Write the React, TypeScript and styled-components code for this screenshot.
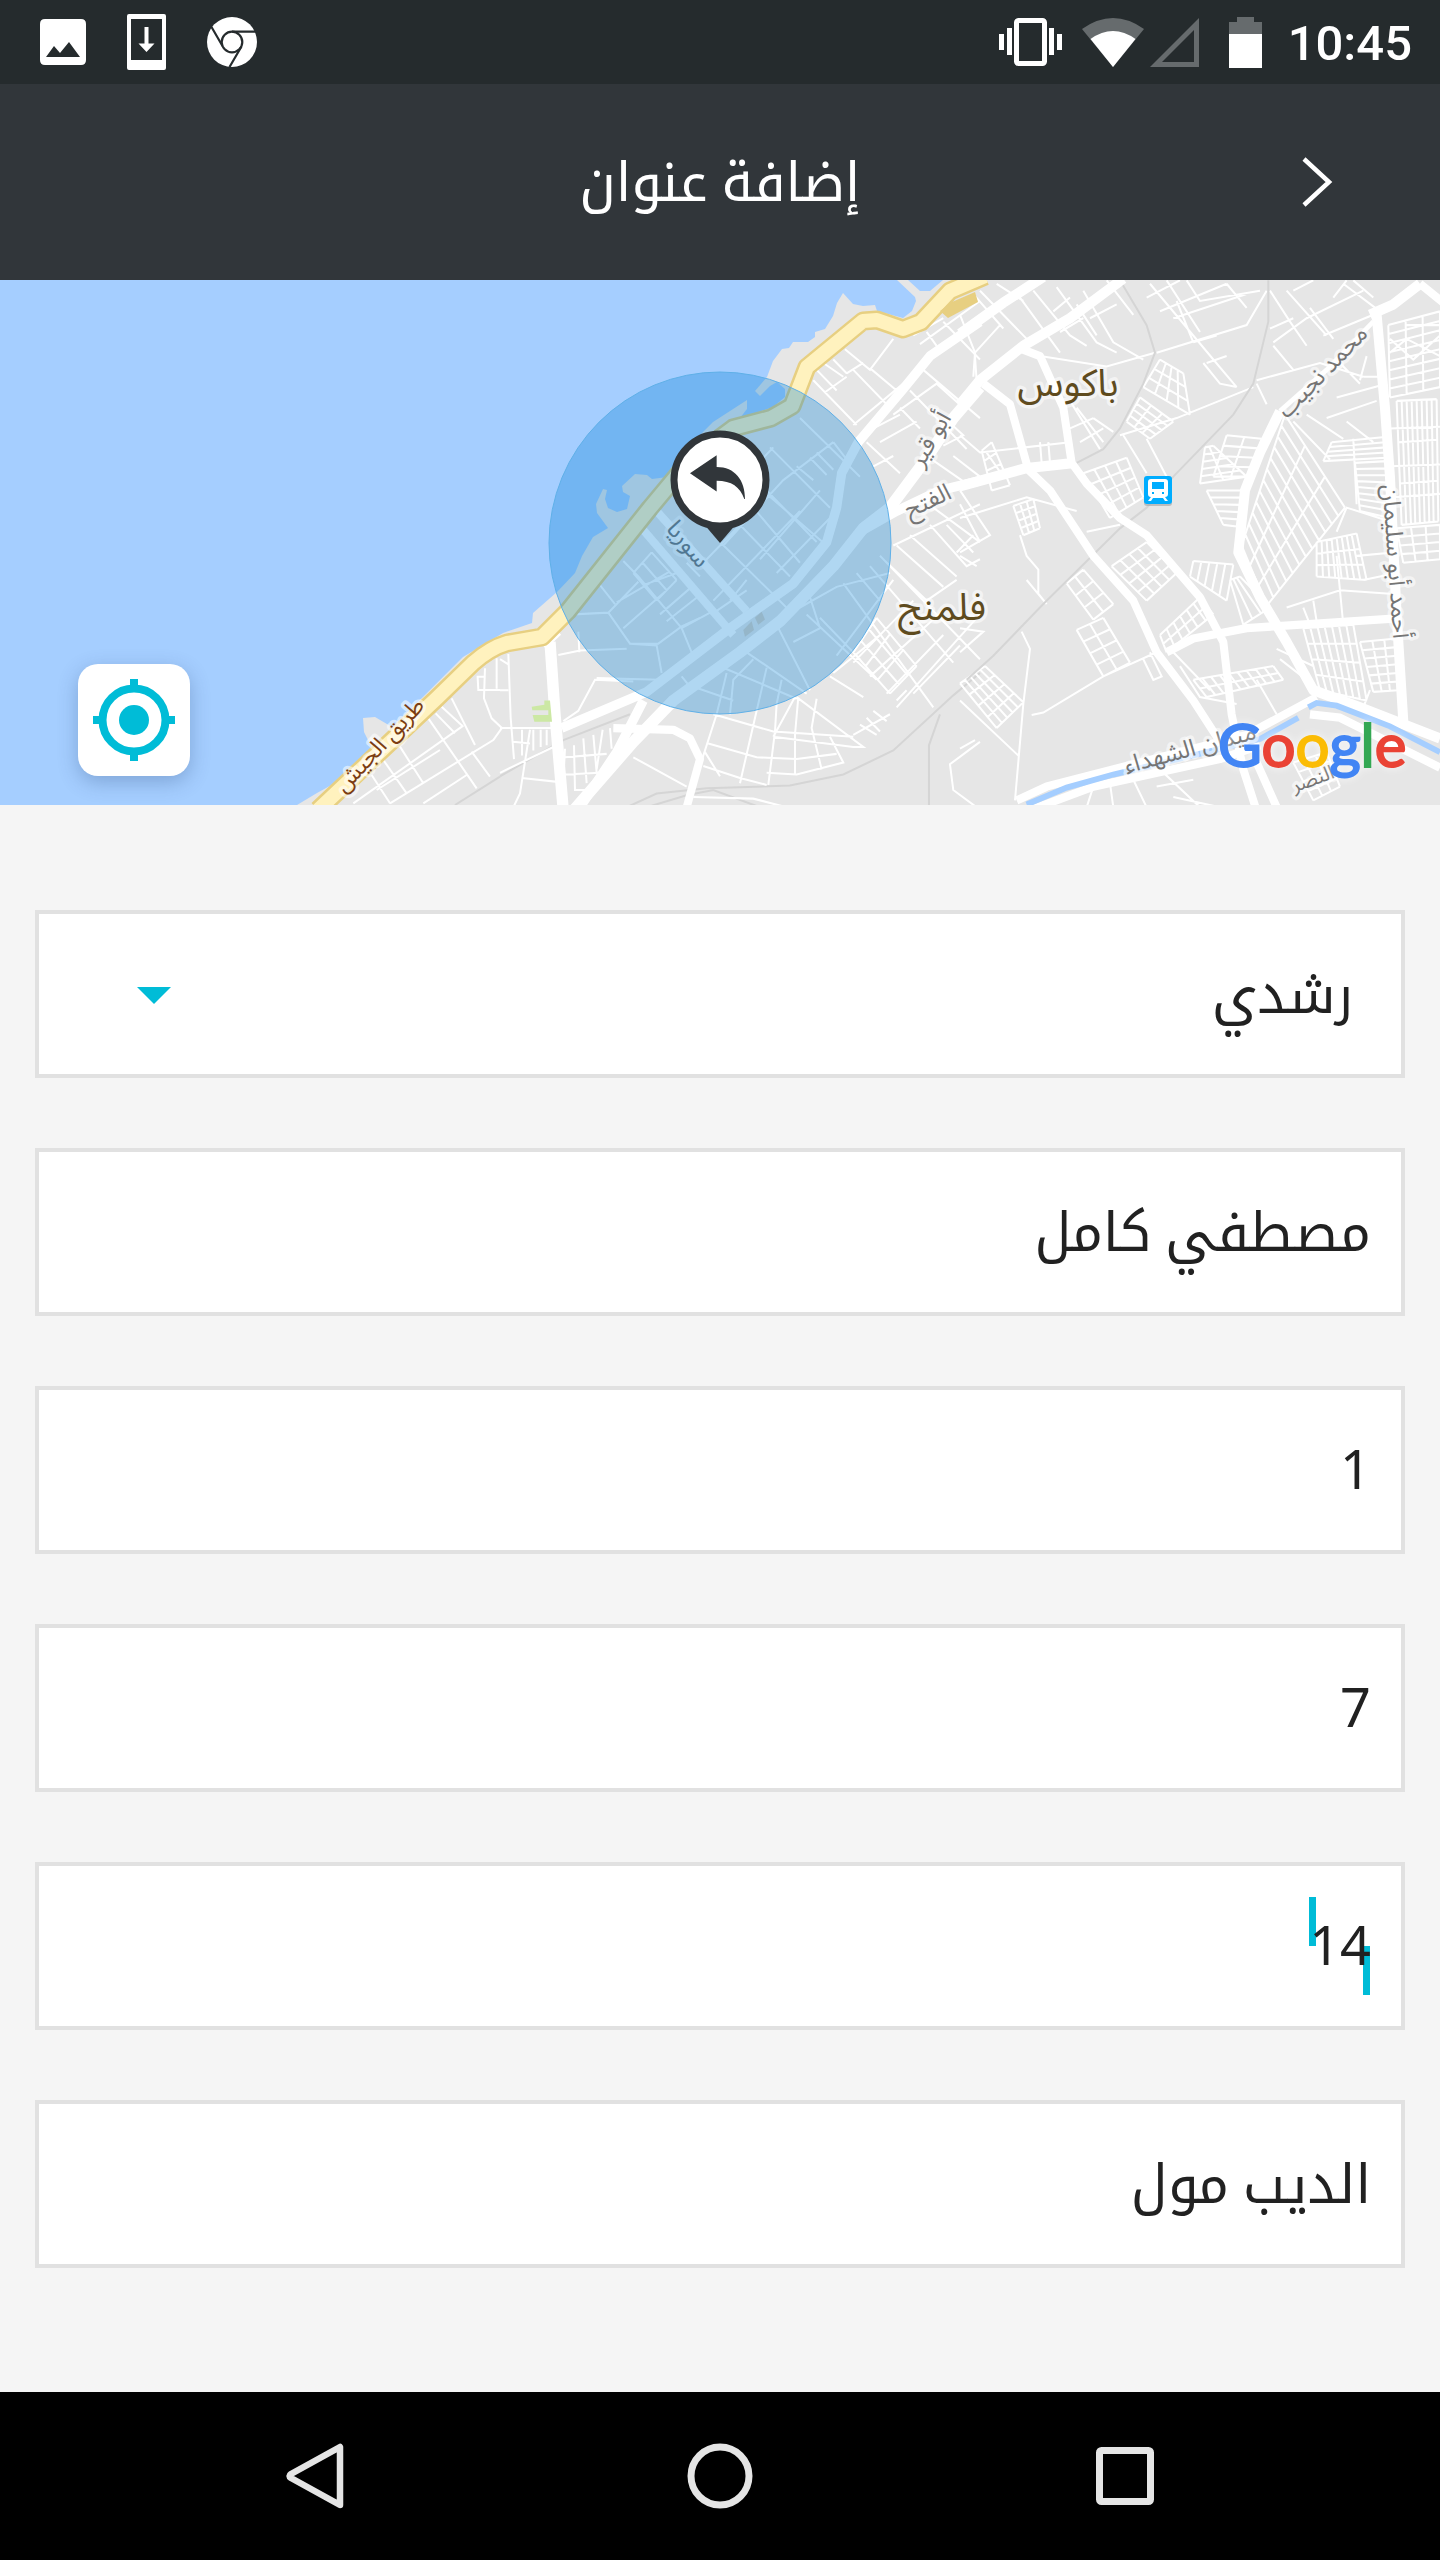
import React, { useState } from 'react';
import styled, { createGlobalStyle } from 'styled-components';

const ui = "'Noto Sans', 'Noto Kufi Arabic', 'Noto Sans Arabic', 'DejaVu Sans', sans-serif";
const cyan = '#00bcd7';
const ink = '#31363a';

const GlobalStyle = createGlobalStyle`
  *, *::before, *::after { box-sizing: border-box; }
  body { margin: 0; background: #f5f5f5; font-family: ${ui}; }
  button { border: 0; padding: 0; background: none; font: inherit; color: inherit; cursor: pointer; }
  svg { display: block; flex: none; }
`;

const Screen = styled.div`
  display: flex;
  flex-direction: column;
  min-height: 100vh;
`;

const StatusBar = styled.div`
  display: flex;
  direction: ltr;
  align-items: center;
  justify-content: space-between;
  height: 84px;
  padding: 0 28px 0 40px;
  background: #252b2d;
`;

const StatusGroup = styled.div<{ $gap: number }>`
  display: flex;
  align-items: center;
  gap: ${(p) => p.$gap}px;
`;

const Clock = styled.span`
  padding-top: 4px;
  font: 500 49px/80px Roboto, sans-serif;
  color: #fff;
`;

const Header = styled.header`
  display: grid;
  grid-template-columns: 1fr auto 1fr;
  align-items: center;
  height: 196px;
  padding: 0 82px;
  background: ${ink};
  color: #fff;
`;

const BackButton = styled.button`
  display: grid;
  place-items: center;
  width: 80px;
  height: 80px;
`;

const Title = styled.h1`
  margin: 0;
  padding-bottom: 4px;
  font-size: 54px;
  font-weight: 400;
  line-height: 80px;
`;

const MapPanel = styled.section`
  position: relative;
  height: 525px;
  overflow: hidden;
  background: #a5ceff;
`;

const MapDrawing = styled.svg`
  width: 100%;
  height: 100%;
`;

const LocateButton = styled.button`
  position: absolute;
  left: 78px;
  bottom: 29px;
  display: grid;
  place-items: center;
  width: 112px;
  height: 112px;
  border-radius: 20px;
  background: #fff;
  box-shadow: 0 6px 20px rgba(40, 70, 120, 0.3);
`;

const Form = styled.form`
  display: flex;
  flex: 1;
  flex-direction: column;
  gap: 70px;
  padding: 105px 35px 124px;
`;

const Field = styled.div`
  position: relative;
  display: flex;
  height: 168px;
  border: 4px solid #e1e1e1;
  background: #fff;
`;

const TextInput = styled.input`
  width: 100%;
  padding: 0 30px 4px;
  border: 0;
  outline: 0;
  background: none;
  color: #212121;
  font: 400 54px/120px ${ui};
`;

const AreaSelect = styled.select`
  width: 100%;
  padding: 0 48px 4px;
  border: 0;
  outline: 0;
  appearance: none;
  background: none;
  color: #212121;
  font: 400 54px/120px ${ui};
`;

const SelectArrow = styled.svg`
  position: absolute;
  left: 98px;
  top: 73px;
  pointer-events: none;
`;

const Caret = styled.span<{ $low?: boolean }>`
  position: absolute;
  top: ${(p) => (p.$low ? 80 : 31)}px;
  right: ${(p) => (p.$low ? 31 : 85)}px;
  width: 7px;
  height: 49px;
  background: ${cyan};
`;

const AboveCarets = styled(TextInput)`
  position: relative;
  z-index: 1;
`;

const NavBar = styled.nav`
  display: flex;
  direction: ltr;
  height: 168px;
  padding: 0 112px;
  background: #000;
`;

const NavButton = styled.button`
  display: grid;
  flex: 1;
  place-items: center;
`;

type Pt = [number, number];

/* Street block: a quad cut into cols x rows by straight lines. */
function block([a, b, c, d]: Pt[], cols: number, rows: number) {
  const mix = (p: Pt, q: Pt, t: number) =>
    `${Math.round(p[0] + (q[0] - p[0]) * t)} ${Math.round(p[1] + (q[1] - p[1]) * t)}`;
  let path = '';
  for (let i = 0; i <= cols; i++) path += `M${mix(a, b, i / cols)}L${mix(d, c, i / cols)}`;
  for (let i = 0; i <= rows; i++) path += `M${mix(a, d, i / rows)}L${mix(b, c, i / rows)}`;
  return path;
}

const LAND =
  'M297 525L317 513L337 502L372 468L364 452L363 438L375 437L392 447L423 417L463 377L503 353L532 343L533 333L557 312L575 293L582 276L593 257L608 248L597 233L596 224L603 209L607 210L605 219L608 228L617 232L627 229L630 216L623 212L622 206L635 194L647 195L652 199L667 197L700 155L713 142L747 120L747 129L740 138L773 127L785 117L785 109L777 102L770 106L760 116L755 111L767 97L773 81L782 69L789 68L793 62L808 62L815 57L815 52L825 49L833 36L837 23L843 13L853 24L863 26L875 25L877 31L903 38L912 31L916 21L915 17L897 0H908L920 11H930L943 0H1440V525Z';

const COAST =
  'M318 530L437 418L473 383Q490 368 507 363L542 357L568 331L650 228L690 180L733 148L771 138L792 126L807 87L863 41L877 40L903 49L921 42L950 11L985 -4';

const west = {
  minor:
    'M220 640L550 407M430 640L560 555M330 640L640 450L665 415M360 470L430 580M275 555L330 640M310 510L380 610M445 385L590 595M485 350L550 410M467 370L525 430M515 325L585 465M575 485L630 560M390 520L550 407M290 600L480 480M615 235L612 325L635 385L665 413M590 260H612M593 262L595 300H660M650 205V296',
  rail: 'M525 645L660 560',
};

const central = {
  minor: [
    'M25 1115L32 1300L42 1420M0 1220H25M0 1130L25 1145M0 1330H170M0 1460L160 1385M65 1475L180 1487M90 1335L60 1520L40 1560M40 1370L90 1375M66 1335V1410M100 1335V1395M122 1335V1385M140 1335V1380',
    'M195 1390L190 1480M195 1415L320 1405M195 1465L300 1460M222 1380L225 1510H260M250 1360L260 1490M280 1350L290 1460M308 1335L290 1450M330 1330L335 1390M175 1118L240 1105L380 1100M235 1050L238 1110M190 1310L235 1280L285 1190L400 1195M290 1185L480 1190M400 1415L560 1500M580 1530L760 1535L860 1560',
    'M370 845L415 890L545 1040L575 1110M300 915L345 970M325 995L415 905M220 1000L325 995L390 1085L470 1090L485 1170M390 1085H475L545 1035L600 1010M350 965L510 875M370 1040L500 930M430 915L530 880M480 1000L575 920M500 1020L605 940M545 1040L640 990',
    'M545 1180L570 1210M580 1210L700 1250M670 1155L890 1245M680 1170L650 1290L600 1440M760 1130L700 1190L690 1290M740 1110L920 1230M800 1155L770 1280L720 1490M845 1190L830 1260L825 1340L805 1495M895 1240L885 1350V1465M950 1245L935 1330L965 1450M640 1290L820 1340L1060 1355M625 1375L770 1415L890 1420L1010 1405M610 1440L720 1475L800 1495M615 1400L660 1470M800 1460L890 1465L1030 1430L990 1355M820 1355L885 1240M890 1240L1090 1385L1060 1385L820 1355',
    'M660 790L870 990M560 850L600 890M600 860L760 700M640 960L900 700M700 720L870 890M760 690L900 850M800 640L950 790M740 600L980 800M810 515L990 690M620 720L820 515M670 800L850 610L1000 500M780 840L960 640M830 880L990 720M690 960L740 900M650 990L740 930M900 430L1080 600M930 545L980 595M950 530L1000 580M890 570L940 610M1000 500L1040 550',
    'M830 1030L930 1220M880 1080L960 1040L930 950M920 1000L1130 1190M960 1010L1080 1130M900 980L1010 920L1170 880M1030 910L1300 1270M1070 880L1140 960M1110 860L1360 1140M1140 830L1440 1130M1010 1120L1180 900M1060 1140L1240 960M1110 1180L1340 980M1160 1230L1330 1060M1190 1270L1440 1000M1240 1230L1380 1090M1000 1170L1140 1060M990 1180L1090 1240',
    'M950 290L1010 350M970 270L1030 310M1000 260L1040 300M975 355L1040 310M940 320L1070 450M1035 230L1110 290L1180 200M1110 285L1190 350M1040 300L1090 270M1060 290L1170 400M1060 450L1210 330M1080 480L1200 420M1200 400L1260 460M1180 420L1310 330L1390 400M1230 350L1400 520M1270 290L1440 430M1100 500L1200 590M1140 500L1250 440M1120 570L1180 540M1280 540L1400 620M1330 510L1390 480L1300 400M1360 540L1440 600',
    'M1240 190L1330 140M1260 215L1440 90M1280 180L1310 220M1330 150L1440 260M1425 250L1430 320M1180 800L1440 680M1150 840L1280 960L1370 900M1190 800L1330 920M1230 770L1370 890M1290 740L1400 860L1440 840M1340 740L1420 820M1370 820L1420 770M1300 690L1440 790M1440 1370L1350 1435L1360 1510L1430 1560M1100 1300L1140 1340M1120 1280L1160 1310M1080 1320L1130 1350M1060 1350L1170 1290M1190 1250L1220 1220',
    block([[455, 820], [530, 900], [470, 960], [400, 880]], 1, 2),
    block([[1130, 1010], [1250, 1150], [1170, 1230], [1060, 1110]], 3, 3),
  ].join(''),
  rail: 'M0 1470L190 1365L390 1290M380 1560L470 1520L620 1505L870 1497L1030 1465L1180 1395L1360 1235L1440 1170M1320 1290L1287 1380V1560M440 1560L560 1525L640 1510L780 1560',
};

const eastern = {
  minor: [
    block([[1285, 160], [1440, 120], [1440, 340], [1290, 370]], 3, 8),
    block([[1310, 380], [1430, 375], [1435, 730], [1325, 740]], 8, 3),
    block([[1115, 500], [1275, 485], [1280, 545], [1090, 555]], 1, 4),
    block([[1185, 560], [1280, 555], [1290, 720], [1200, 700]], 1, 8),
    block([[975, 420], [1155, 690], [920, 975], [845, 800]], 3, 12),
    block([[1070, 790], [1190, 765], [1220, 900], [1070, 890]], 8, 3),
    block([[1310, 750], [1440, 740], [1440, 840], [1330, 850]], 3, 4),
    block([[1030, 1040], [1180, 1030], [1220, 1250], [1080, 1220]], 7, 4),
    block([[1200, 1080], [1310, 1070], [1315, 1220], [1240, 1225]], 3, 6),
    block([[800, 480], [905, 490], [865, 600], [760, 600]], 2, 4),
    block([[735, 515], [760, 510], [860, 600], [720, 620]], 2, 5),
    block([[740, 640], [850, 640], [830, 745], [790, 740]], 1, 5),
    block([[370, 590], [500, 545], [550, 660], [450, 720]], 4, 4),
    block([[455, 860], [560, 790], [650, 880], [560, 960]], 4, 4),
    block([[600, 1060], [720, 950], [760, 1000], [620, 1110]], 6, 2),
    block([[700, 845], [820, 855], [800, 960], [690, 890]], 5, 1),
    block([[700, 1190], [940, 1150], [970, 1190], [740, 1240]], 9, 2),
    block([[160, 685], [220, 665], [240, 750], [190, 770]], 3, 4),
    block([[320, 910], [370, 870], [460, 970], [400, 1015]], 2, 3),
    block([[350, 1045], [430, 1010], [510, 1140], [430, 1180]], 2, 4),
    block([[0, 1200], [75, 1150], [190, 1255], [110, 1330]], 5, 4),
    block([[600, 260], [670, 300], [690, 420], [550, 340]], 4, 3),
    block([[500, 440], [540, 370], [640, 440], [570, 490]], 4, 3),
    block([[65, 525], [95, 500], [150, 625], [95, 640]], 1, 4),
    block([[810, 900], [840, 890], [930, 980], [850, 1030]], 3, 1),
    block([[1000, 1430], [1100, 1400], [1140, 1500], [1060, 1540]], 3, 4),
    'M40 70L130 170M60 60L200 200M110 40L190 90M0 130L45 240L40 310M45 240L120 160M180 80L300 240M220 60L330 190L380 220M290 50L410 210L470 240M350 100L410 190M370 60L460 210L550 260M440 30L520 130M390 140L470 100M240 250L440 280L585 240M300 180L370 140M280 120L330 80',
    'M570 40L760 260L830 340M560 80L660 30M620 30L720 180M600 120L800 40M640 140L860 70M680 30L720 90L900 60M590 240L860 160L920 60M800 40L860 110M650 90L700 210M700 210L770 190M740 270L800 250M730 270L780 330L830 340M480 480L650 430L880 340M490 480L560 590M560 490L620 600M420 520L330 380M330 460L400 430M360 500L430 460M400 430L460 470M350 400L430 500',
    'M930 60L990 150L1040 220M980 60L1100 190M940 210L1040 140L1210 60M1050 110L1120 200M930 170L1000 140M890 320L1080 270L1210 310M890 330L920 390M940 220L1000 290M1150 40L1260 120M1180 30L1240 80M1000 60L1060 30M1120 80L1160 30M1090 190L1240 130M1100 430L1250 380M1160 440L1240 500M1000 440L1110 550M1040 420L1150 490M1130 370L1280 330M1200 320L1220 250M1130 260L1200 330M1210 310H1280',
    'M0 720L200 660L350 700M0 640L90 770L0 820M0 830L50 860M0 680L60 790M180 770L200 830L235 870V940L260 970M185 1050L210 1100L190 1260L165 1540M0 1040L70 1050L0 1110M430 1180L250 1285L215 1292M0 1250L175 1410M430 1180L590 1110M550 1130L580 1190L605 1180L570 1110M0 480L60 530L330 500M80 530L130 600M240 500L245 560M265 500L270 560M380 760L480 740M200 900L260 970M0 1390L45 1365',
    'M640 1110L750 1220M660 1150L720 1240L830 1260M890 1190L950 1290M950 1100L1060 1150M960 1130L1040 1190M980 980L1140 930L1290 940M1130 760L1160 690L1290 730M1180 490L1190 680M1290 460L1440 455M1290 570L1440 565M1300 660L1440 650M1060 960L1070 1020M1030 980L1050 1030M1130 830L1150 1030M1190 830L1300 820M1210 900L1310 880M450 1490L460 1560M520 1480L560 1560M600 1450L720 1560M590 1500L700 1480M400 1500L380 1560M640 1530L780 1560M1230 1220L1210 1270M1340 160H1440M1290 240L1340 200L1440 250M1290 200L1360 260L1440 190',
  ].join(''),
  rail: 'M20 1190L100 1120L250 970L480 750L560 690L640 600L820 420L880 330L925 150V30M480 30L560 160L585 240L550 330L480 460L430 520L350 560',
};

const StreetLabel = styled.text<{ $size: number; $tone: string }>`
  font-family: 'Noto Sans Arabic', 'DejaVu Sans', sans-serif;
  font-size: ${(p) => p.$size}px;
  fill: ${(p) => p.$tone};
  stroke: rgba(255, 255, 255, 0.55);
  stroke-width: 7px;
  stroke-linejoin: round;
  paint-order: stroke;
  text-anchor: middle;
  direction: rtl;
`;

const Wordmark = styled.text`
  font-family: Lato, sans-serif;
  font-size: 60px;
  font-weight: 400;
  stroke-width: 2px;
  direction: ltr;
  filter: drop-shadow(0 0 4px rgba(255, 255, 255, 0.8));
`;

const Letter = styled.tspan<{ $tone: string }>`
  fill: ${(p) => p.$tone};
  stroke: ${(p) => p.$tone};
`;

const labels = [
  { text: 'باكوس', x: 1068, y: 116, turn: 0, size: 38, tone: '#5f4b1e' },
  { text: 'فلمنج', x: 942, y: 340, turn: 0, size: 38, tone: '#5f4b1e' },
  { text: 'سوريا', x: 682, y: 269, turn: 50, size: 24, tone: '#757575' },
  { text: 'أبو قير', x: 937, y: 163, turn: -60, size: 24, tone: '#757575' },
  { text: 'الفتح', x: 931, y: 228, turn: -25, size: 24, tone: '#757575' },
  { text: 'محمد نجيب', x: 1328, y: 97, turn: -46, size: 24, tone: '#757575' },
  { text: 'أحمد أبو سليمان', x: 1388, y: 282, turn: 86, size: 24, tone: '#757575' },
  { text: 'ميدان الشهداء', x: 1192, y: 476, turn: -15, size: 24, tone: '#757575' },
  { text: 'النصر', x: 1315, y: 505, turn: -20, size: 20, tone: '#757575' },
  { text: 'طريق الجيش', x: 385, y: 470, turn: -47, size: 23, tone: '#7b3d12' },
];

function CityMap() {
  return (
    <MapDrawing viewBox="0 0 1440 525" preserveAspectRatio="xMidYMid slice" role="img" aria-label="خريطة">
      <path d={LAND} fill="#e6e6e6" />
      <g fill="none" stroke="#fff" strokeWidth="6">
        <g transform="translate(280 310) scale(.3333)">
          <path d={west.minor} />
          <path d={west.rail} stroke="#d5d5d5" />
        </g>
        <g transform="translate(500 -10) scale(.3333 .3444)">
          <path d={central.rail} stroke="#d5d5d5" />
          <path d={central.minor} />
          <g strokeLinejoin="round">
            <path strokeWidth="34" d="M150 1080L165 1290L190 1570M220 1570L400 1370L520 1250L720 1110L840 1020L1000 860L1090 750L1170 690L1270 560L1360 430L1440 340" />
            <path strokeWidth="28" d="M185 1330L440 1225L690 1040L880 910L980 790L1010 690L1025 590L1075 500L1210 345L1290 250L1440 150M430 1250L350 1400L240 1560M1080 760L1190 700L1320 640L1440 612" />
            <path strokeWidth="24" d="M340 1330L520 1335L570 1360L600 1420L560 1560M470 700L740 990M430 755L700 1060M130 1092L175 1050" />
          </g>
          <path d="M95 1268L133 1262V1250H150L156 1312H103L98 1292H145V1278H97Z" fill="#cce8a4" stroke="none" />
          <path d="M730 1045L755 1020L762 1045L735 1065ZM765 1010L785 992L795 1015L775 1030Z" fill="#d8cfc4" stroke="none" />
        </g>
        <g transform="translate(960 -10) scale(.3333 .3444)">
          <path d={eastern.minor} />
          <path d={eastern.rail} stroke="#d5d5d5" />
          <g strokeLinejoin="round">
            <path strokeWidth="30" d="M0 185L130 95L250 20M0 390L60 320L190 220L330 140L490 25M0 628L200 575L345 560M1380 40L1300 100L1230 130M1250 130L1275 400L1290 600L1310 1000L1330 1310M960 410L900 530L855 640L835 820L900 950L980 1080L1060 1220L1200 1270L1440 1360" />
            <path strokeWidth="24" d="M185 230L240 250L310 400L335 560L380 620L480 720L560 770L720 950L790 1080L815 1290L850 1450L890 1570M70 330L150 390L205 580L270 640L400 830L520 960L590 1110L700 1250L780 1370M620 1110L700 1070L860 1040L1300 1012M170 1540L260 1500L860 1350L1070 1240M220 1565L400 1500L780 1420L900 1380M1050 1290L1140 1300L1440 1445M890 1430L955 1570M1380 40L1450 95" />
            <path strokeWidth="14" d="M1240 150L1100 290L960 410" />
          </g>
          <path strokeWidth="17" stroke="#a5ceff" d="M200 1552L320 1503L460 1465L740 1400L900 1362L1015 1300M1045 1270L1070 1257L1130 1265L1290 1325L1440 1400" />
        </g>
      </g>
      <g fill="none" strokeLinejoin="round">
        <path d={COAST} stroke="#e7cf81" strokeWidth="19" />
        <path d={COAST} stroke="#fff2be" strokeWidth="14" />
      </g>
      <path d="M940 31L952 22L975 12L978 22L948 38Z" fill="#e7cf81" />
      {labels.map((l) => (
        <StreetLabel key={l.text} $size={l.size} $tone={l.tone} transform={`translate(${l.x} ${l.y}) rotate(${l.turn})`}>
          {l.text}
        </StreetLabel>
      ))}
      <rect x="1144" y="198" width="28" height="28" rx="3" fill="#aaa" opacity=".7" />
      <rect x="1144" y="196" width="28" height="28" rx="3" fill="#00adff" />
      <path
        d="M1151 199h14q3 0 3 3v12q0 3-3 3l3 4h-3l-2-3h-10l-2 3h-3l3-4q-3 0-3-3v-12q0-3 3-3ZM1152 202v7h12v-7ZM1152 212v2h2v-2ZM1162 212v2h2v-2Z"
        fill="#fff"
        fillRule="evenodd"
      />
      <circle cx="720" cy="263" r="171" fill="rgba(0,125,213,.31)" stroke="#5fb0e8" strokeWidth="1" />
      <path d="M703 243L720 263L737 243Z" fill={ink} />
      <circle cx="720" cy="200" r="46" fill="#fff" stroke={ink} strokeWidth="7" />
      <path
        transform="translate(500 -10) scale(.3333 .3444)"
        d="M570 590L650 538V572C705 572 735 610 735 665H733C720 630 695 612 650 612V643Z"
        fill={ink}
      />
      <Wordmark x="1218" y="487">
        <Letter $tone="#4285f4">G</Letter>
        <Letter $tone="#ea4335">o</Letter>
        <Letter $tone="#fbbc05">o</Letter>
        <Letter $tone="#4285f4">g</Letter>
        <Letter $tone="#34a853">l</Letter>
        <Letter $tone="#ea4335">e</Letter>
      </Wordmark>
    </MapDrawing>
  );
}

function StatusIcons() {
  return (
    <StatusBar>
      <StatusGroup $gap={41}>
        <svg width="46" height="46" viewBox="0 0 46 46">
          <path fill="#fff" fillRule="evenodd" d="M5 0h36q5 0 5 5v36q0 5-5 5H5q-5 0-5-5V5q0-5 5-5ZM6 38h34L29 23 20 34 14 27Z" />
        </svg>
        <svg width="39" height="56" viewBox="0 0 39 56">
          <path fill="#fff" fillRule="evenodd" d="M2 0h35q2 0 2 2v52q0 2-2 2H2q-2 0-2-2V2q0-2 2-2ZM4 5v41h31V5Z" />
          <path fill="#fff" d="M17.500 13h4v16.500h6L19.500 38 11.500 29.500h6Z" />
        </svg>
        <svg width="50" height="50" viewBox="0 0 50 50">
          <circle cx="25" cy="25" r="25" fill="#fff" />
          <g fill="none" stroke="#252b2d" strokeWidth="2.200">
            <circle cx="25" cy="25" r="10.300" />
            <path d="M25 14.700H49M15.500 29L4.500 10M34.500 29.500L22.500 50" />
          </g>
        </svg>
      </StatusGroup>
      <StatusGroup $gap={26}>
        <StatusGroup $gap={30}>
          <StatusGroup $gap={20}>
            <svg width="63" height="48" viewBox="0 0 63 48" fill="#fff">
              <rect x="17.500" y="2.500" width="28" height="43" rx="2" fill="none" stroke="#fff" strokeWidth="5" />
              <path d="M0 16h5v16H0ZM8 10h5v27H8ZM50 10h5v27h-5ZM58 16h5v16h-5Z" />
            </svg>
            <StatusGroup $gap={6}>
              <svg width="62" height="49" viewBox="0 0 62 49">
                <path fill="#666b6d" d="M0 11Q31-11 62 11L31 49Z" />
                <path fill="#fff" d="M8.500 21Q31 5 53.500 21L31 49Z" />
              </svg>
              <svg width="49" height="49" viewBox="0 0 49 49">
                <path fill="#666b6d" fillRule="evenodd" d="M49 0V49H0ZM44 12V44H12Z" />
              </svg>
            </StatusGroup>
          </StatusGroup>
          <svg width="33" height="51" viewBox="0 0 33 51">
            <path fill="#666b6d" d="M8 0h17v5h8v14H0V5h8Z" />
            <path fill="#fff" d="M0 17h33v34H0Z" />
          </svg>
        </StatusGroup>
        <Clock>10:45</Clock>
      </StatusGroup>
    </StatusBar>
  );
}

const fields = [
  { name: 'street', label: 'الشارع', value: 'مصطفي كامل' },
  { name: 'building', label: 'رقم المبنى', value: '1' },
  { name: 'floor', label: 'الطابق', value: '7' },
  { name: 'apartment', label: 'رقم الشقة', value: '14', carets: true },
  { name: 'landmark', label: 'علامة مميزة', value: 'الديب مول' },
];

export default function App() {
  const [values, setValues] = useState<Record<string, string>>(
    Object.fromEntries(fields.map((f) => [f.name, f.value])),
  );

  return (
    <Screen dir="rtl" lang="ar">
      <GlobalStyle />
      <StatusIcons />
      <Header>
        <BackButton aria-label="رجوع">
          <svg width="32" height="50" viewBox="0 0 32 50">
            <path d="M2 2L27 25L2 48" fill="none" stroke="#fff" strokeWidth="4.500" />
          </svg>
        </BackButton>
        <Title>إضافة عنوان</Title>
      </Header>
      <MapPanel>
        <CityMap />
        <LocateButton aria-label="موقعي">
          <svg width="82" height="82" viewBox="0 0 82 82">
            <circle cx="41" cy="41" r="31.500" fill="none" stroke={cyan} strokeWidth="8" />
            <circle cx="41" cy="41" r="15" fill={cyan} />
            <path d="M37 0h8v10h-8ZM37 72h8v10h-8ZM0 37h10v8H0ZM72 37h10v8H72Z" fill={cyan} />
          </svg>
        </LocateButton>
      </MapPanel>
      <Form>
        <Field>
          <AreaSelect aria-label="المنطقة" name="area" defaultValue="رشدي">
            <option>رشدي</option>
            <option>باكوس</option>
            <option>فلمنج</option>
          </AreaSelect>
          <SelectArrow width="34" height="17" viewBox="0 0 34 17">
            <path d="M0 0H34L17 17Z" fill={cyan} />
          </SelectArrow>
        </Field>
        {fields.map((f) => {
          const Input = f.carets ? AboveCarets : TextInput;
          return (
            <Field key={f.name}>
              {f.carets && <Caret />}
              {f.carets && <Caret $low />}
              <Input
                aria-label={f.label}
                name={f.name}
                value={values[f.name]}
                onChange={(e: React.ChangeEvent<HTMLInputElement>) =>
                  setValues({ ...values, [f.name]: e.target.value })
                }
              />
            </Field>
          );
        })}
      </Form>
      <NavBar>
        <NavButton aria-label="السابق">
          <svg width="58" height="66" viewBox="0 0 58 66">
            <path d="M54 4V62L5 35Q2 33 5 31Z" fill="none" stroke="#e5e5e5" strokeWidth="6.500" strokeLinejoin="round" />
          </svg>
        </NavButton>
        <NavButton aria-label="الرئيسية">
          <svg width="66" height="66" viewBox="0 0 66 66">
            <circle cx="33" cy="33" r="29" fill="none" stroke="#e5e5e5" strokeWidth="7" />
          </svg>
        </NavButton>
        <NavButton aria-label="التطبيقات">
          <svg width="58" height="58" viewBox="0 0 58 58">
            <rect x="3.500" y="3.500" width="51" height="51" rx="2" fill="none" stroke="#e5e5e5" strokeWidth="7" />
          </svg>
        </NavButton>
      </NavBar>
    </Screen>
  );
}
